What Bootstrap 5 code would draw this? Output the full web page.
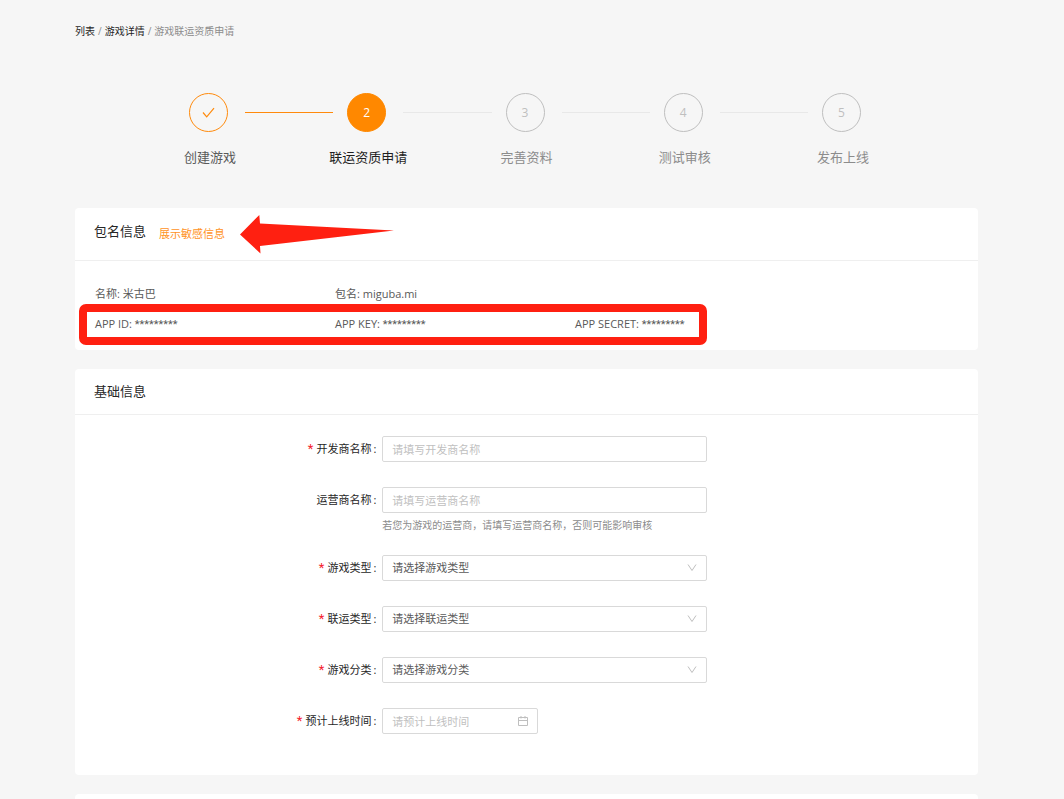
<!DOCTYPE html>
<html lang="zh-CN">
<head>
<meta charset="utf-8">
<meta name="viewport" content="width=device-width, initial-scale=1">
<title>游戏联运资质申请</title>
<link href="https://cdn.jsdelivr.net/npm/bootstrap@5.3.0/dist/css/bootstrap.min.css" rel="stylesheet">
<style>
  body { background: #f6f6f6; color: #595959; font-family: "Open Sans", "Noto Sans CJK SC", sans-serif; font-size: 11px; line-height: 18px; }
  .page-wrap { padding: 22px 86px 0 75px; }
  .crumbs { --bs-breadcrumb-item-padding-x: 3px; --bs-breadcrumb-divider-color: #8c8c8c; font-size: 10px; }
  .crumbs a { color: #1f1f1f; text-decoration: none; }
  .crumbs .active { color: #8c8c8c; }

  /* progress steps */
  .steps { padding: 0 70px; margin: 53px 0 40px; }
  .step { flex: 1; color: #8c8c8c; }
  .step:last-child { flex: none; }
  .step-dot { width: 39px; height: 39px; margin-left: 44px; border: 1px solid #bfbfbf; border-radius: 50%; color: #bfbfbf; font-size: 12px; flex: none; }
  .step-line { height: 1px; background: #e8e8e8; margin: 0 -30px 0 17px; }
  .step-name { width: 130px; font-size: 13px; line-height: 22px; margin-top: 14px; }
  .step.done { color: #595959; }
  .done .step-dot { border-color: #ff8a0c; color: #ff8a0c; }
  .done .step-line { background: #ff8a0c; }
  .step.now { color: #1f1f1f; }
  .now .step-dot { background: #ff8800; border-color: #ff8800; color: #fff; }

  /* panels */
  .panel { border: 0; border-radius: 4px; margin-bottom: 19px; overflow: hidden; }
  .panel .card-header { background: #fff; border-bottom: 1px solid #efefef; padding: 12px 19px; }
  .panel .card-header.tall { padding: 13px 19px 17px; }
  .panel h2 { font-size: 13px; line-height: 21px; margin: 0; color: #262626; font-weight: 400; }
  .panel .card-body { padding: 21px 19px; }
  .reveal { color: #ff9326; text-decoration: none; margin-left: 13px; line-height: 18px; padding-top: 4px; }
  .arrow { width: 154px; height: 39px; left: 165px; top: 7px; }
  .panel .info-body { padding: 24px 20px 17px; }
  .info-line { margin-bottom: 12px; }
  .info-line:last-child { margin-bottom: 0; }
  .info-line > div { flex: 0 0 240px; }
  .masked { font-family: Roboto, sans-serif; line-height: 1; }
  .red-frame { left: -16px; top: -11px; width: 628px; height: 41px; border: 8px solid #ff2011; border-radius: 7px; }

  /* form */
  .field { margin-bottom: 25px; }
  .field.hinted { margin-bottom: 22px; }
  .field-name { padding: 4px 6px 4px 0; text-align: right; color: #262626; }
  .field-name.must::before { content: "*"; color: #f5222d; margin-right: 3px; font-family: Roboto, sans-serif; font-size: 13px; line-height: 1; }
  .field-name::after { content: ":"; margin-left: 2px; }
  .field-box { flex: 0 0 37.5%; }
  .field-box .form-control, .field-box .form-select { height: 26px; padding: 0 9px; border: 1px solid #d9d9d9; border-radius: 2px; font-size: 11px; line-height: 18px; color: #595959; background-image: none; }
  .field-box .form-control::placeholder { color: #bfbfbf; opacity: 1; }
  .field-icon { right: 10px; top: 8px; width: 10px; height: 10px; color: #bfbfbf; pointer-events: none; }
  .date-box { width: 156px; }
  .hint { font-size: 10px; line-height: 15px; padding-top: 5px; color: #8c8c8c; }
</style>
</head>
<body>
<div class="page-wrap">
  <nav aria-label="breadcrumb">
    <ol class="breadcrumb crumbs mb-0">
      <li class="breadcrumb-item"><a href="#">列表</a></li>
      <li class="breadcrumb-item"><a href="#">游戏详情</a></li>
      <li class="breadcrumb-item active" aria-current="page">游戏联运资质申请</li>
    </ol>
  </nav>

  <div class="steps d-flex">
    <div class="step done">
      <div class="d-flex align-items-center">
        <div class="step-dot d-flex align-items-center justify-content-center"><svg width="13" height="12" viewBox="0 0 13 12" fill="none" stroke="currentColor" stroke-width="1.2"><path d="M1 5.5 4.7 9.8 12 1.2"/></svg></div>
        <div class="step-line flex-fill"></div>
      </div>
      <div class="step-name text-center">创建游戏</div>
    </div>
    <div class="step now">
      <div class="d-flex align-items-center">
        <div class="step-dot d-flex align-items-center justify-content-center">2</div>
        <div class="step-line flex-fill"></div>
      </div>
      <div class="step-name text-center">联运资质申请</div>
    </div>
    <div class="step">
      <div class="d-flex align-items-center">
        <div class="step-dot d-flex align-items-center justify-content-center">3</div>
        <div class="step-line flex-fill"></div>
      </div>
      <div class="step-name text-center">完善资料</div>
    </div>
    <div class="step">
      <div class="d-flex align-items-center">
        <div class="step-dot d-flex align-items-center justify-content-center">4</div>
        <div class="step-line flex-fill"></div>
      </div>
      <div class="step-name text-center">测试审核</div>
    </div>
    <div class="step">
      <div class="d-flex align-items-center">
        <div class="step-dot d-flex align-items-center justify-content-center">5</div>
      </div>
      <div class="step-name text-center">发布上线</div>
    </div>
  </div>

  <section class="card panel">
    <div class="card-header tall d-flex align-items-start position-relative">
      <h2>包名信息</h2>
      <a class="reveal" href="#">展示敏感信息</a>
      <svg class="arrow position-absolute" viewBox="0 0 154 39" fill="#ff2011"><path d="M0 19.5 19.300 0 20 8.500 154 15.500 20 31 20.500 38.500Z"/></svg>
    </div>
    <div class="card-body info-body">
      <div class="info-line d-flex">
        <div>名称: 米古巴</div>
        <div>包名: miguba.mi</div>
      </div>
      <div class="info-line d-flex position-relative">
        <div>APP ID: <span class="masked">*********</span></div>
        <div>APP KEY: <span class="masked">*********</span></div>
        <div>APP SECRET: <span class="masked">*********</span></div>
        <span class="red-frame position-absolute"></span>
      </div>
    </div>
  </section>

  <section class="card panel">
    <div class="card-header"><h2>基础信息</h2></div>
    <form class="card-body">
      <div class="field row g-0">
        <label class="field-name must col-4" for="dev">开发商名称</label>
        <div class="field-box"><input class="form-control" id="dev" type="text" placeholder="请填写开发商名称"></div>
      </div>
      <div class="field hinted row g-0">
        <label class="field-name col-4" for="op">运营商名称</label>
        <div class="field-box">
          <input class="form-control" id="op" type="text" placeholder="请填写运营商名称">
          <div class="hint text-nowrap">若您为游戏的运营商，请填写运营商名称，否则可能影响审核</div>
        </div>
      </div>
      <div class="field row g-0">
        <label class="field-name must col-4" for="kind">游戏类型</label>
        <div class="field-box position-relative">
          <select class="form-select" id="kind"><option>请选择游戏类型</option></select>
          <svg class="field-icon position-absolute" viewBox="0 0 10 10" fill="none" stroke="currentColor"><path d="M1 1.500 5 7.500 9 1.500"/></svg>
        </div>
      </div>
      <div class="field row g-0">
        <label class="field-name must col-4" for="coop">联运类型</label>
        <div class="field-box position-relative">
          <select class="form-select" id="coop"><option>请选择联运类型</option></select>
          <svg class="field-icon position-absolute" viewBox="0 0 10 10" fill="none" stroke="currentColor"><path d="M1 1.500 5 7.500 9 1.500"/></svg>
        </div>
      </div>
      <div class="field row g-0">
        <label class="field-name must col-4" for="cat">游戏分类</label>
        <div class="field-box position-relative">
          <select class="form-select" id="cat"><option>请选择游戏分类</option></select>
          <svg class="field-icon position-absolute" viewBox="0 0 10 10" fill="none" stroke="currentColor"><path d="M1 1.500 5 7.500 9 1.500"/></svg>
        </div>
      </div>
      <div class="field row g-0 mb-0 pb-3">
        <label class="field-name must col-4" for="date">预计上线时间</label>
        <div class="field-box pb-1">
          <div class="date-box position-relative">
            <input class="form-control" id="date" type="text" placeholder="请预计上线时间">
            <svg class="field-icon position-absolute" viewBox="0 0 10 10" fill="none" stroke="currentColor"><path d="M.5 1.500H9.500V9.500H.5ZM.5 4.500H9.500M3 0V2.500M7 0V2.500"/></svg>
          </div>
        </div>
      </div>
    </form>
  </section>

  <section class="card panel mb-0">
    <div class="card-header"></div>
  </section>
</div>
</body>
</html>
